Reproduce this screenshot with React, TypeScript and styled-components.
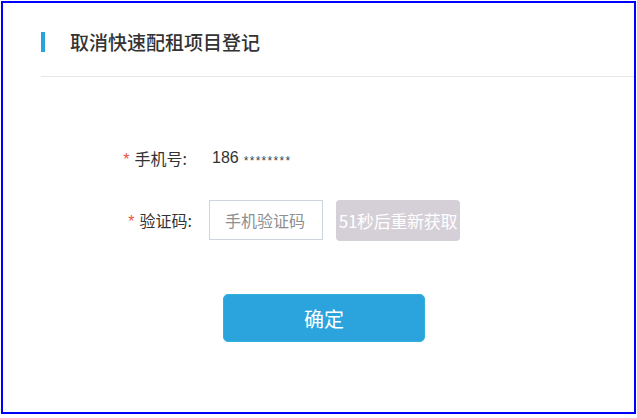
import React from 'react';
import styled, { createGlobalStyle } from 'styled-components';

const GlobalStyle = createGlobalStyle`
  html, body {
    margin: 0;
    padding: 0;
    background: #ffffff;
    font-family: "Liberation Sans", "Noto Sans CJK SC", sans-serif;
  }
`;

const Frame = styled.div`
  margin: 1px;
  width: 635px;
  height: 413px;
  box-sizing: border-box;
  border: 2px solid #0000ff;
  background: #fff;
  display: flex;
  flex-direction: column;
`;

const Header = styled.div`
  margin-left: 38px;
  padding: 29px 0 24px;
  display: flex;
  align-items: center;
  border-bottom: 1px solid #e6e6e6;
`;

const Accent = styled.span`
  width: 4px;
  height: 20px;
  background: #29a3dd;
  margin-right: 25px;
`;

const Title = styled.h1`
  margin: 0;
  font-family: "Noto Sans CJK SC", sans-serif;
  font-size: 19px;
  font-weight: 500;
  line-height: 20px;
  color: #333;
`;

const Form = styled.div`
  padding: 61px 0 0 117px;
  display: flex;
  flex-direction: column;
  gap: 22px;
`;

const Row = styled.div`
  height: 40px;
  display: flex;
  align-items: center;
`;

const Label = styled.label<{ $width: number }>`
  width: ${(p) => p.$width}px;
  text-align: right;
  font-family: "Noto Sans CJK SC", sans-serif;
  font-size: 16px;
  color: #333;
  flex: 0 0 auto;
  white-space: nowrap;
`;

const Star = styled.span`
  color: #e8553f;
  margin-right: 5px;
  font-family: "Liberation Sans", sans-serif;
`;

const Value = styled.span`
  margin-left: 25px;
  font-size: 16px;
  color: #333;
`;

const Mask = styled.span`
  font-size: 12px;
  letter-spacing: 1.3px;
  color: #444;
  margin-left: 5px;
  position: relative;
  top: 2px;
`;

const CodeInput = styled.input`
  margin-left: 17px;
  width: 114px;
  height: 40px;
  box-sizing: border-box;
  border: 1px solid #cdd3df;
  padding: 0 0 0 15px;
  font-family: "Noto Sans CJK SC", sans-serif;
  font-size: 16px;
  color: #333;
  outline: none;
  &::placeholder {
    color: #8f8f8f;
  }
`;

const ResendButton = styled.button`
  margin-left: 13px;
  width: 124px;
  height: 41px;
  border: none;
  border-radius: 4px;
  background: #d5d0d7;
  color: #fff;
  font-family: "Noto Sans CJK SC", sans-serif;
  font-size: 17px;
  padding: 0;
  white-space: nowrap;
  letter-spacing: -0.3px;
`;

const Actions = styled.div`
  padding: 54px 0 0 220px;
`;

const SubmitButton = styled.button`
  width: 202px;
  height: 48px;
  border: 1px solid #30b3da;
  border-radius: 5px;
  background: #2ba4dd;
  color: #fff;
  font-family: "Noto Sans CJK SC", sans-serif;
  font-size: 20px;
  cursor: pointer;
`;

export default function App() {
  return (
    <>
      <GlobalStyle />
      <Frame>
        <Header>
          <Accent />
          <Title>取消快速配租项目登记</Title>
        </Header>
        <Form>
          <Row>
            <Label $width={67}>
              <Star>*</Star>手机号:
            </Label>
            <Value>
              186<Mask>********</Mask>
            </Value>
          </Row>
          <Row>
            <Label $width={72}>
              <Star>*</Star>验证码:
            </Label>
            <CodeInput placeholder="手机验证码" />
            <ResendButton>51秒后重新获取</ResendButton>
          </Row>
        </Form>
        <Actions>
          <SubmitButton>确定</SubmitButton>
        </Actions>
      </Frame>
    </>
  );
}
